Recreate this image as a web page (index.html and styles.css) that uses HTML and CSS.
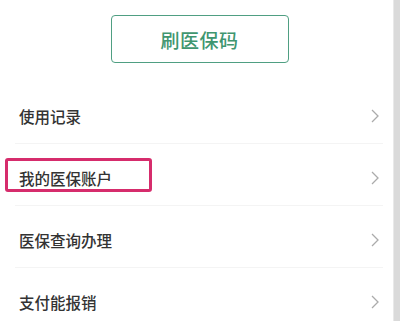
FILE: index.html
```html
<!DOCTYPE html>
<html lang="zh-CN">
<head>
    <meta charset="UTF-8">
    <meta name="viewport" content="width=device-width, initial-scale=1.0">
    <title>医保</title>
    <link rel="stylesheet" href="styles.css">
</head>
<body>
    <div class="page">
        <main class="content">
            <div class="code-area">
                <button class="code-btn">刷医保码</button>
            </div>
            <ul class="menu">
                <li class="item">
                    <span class="label">使用记录</span>
                    <svg class="arrow" width="8" height="14" viewBox="0 0 8 14"><polyline points="1,1 7,7 1,13" fill="none" stroke="#ababab" stroke-width="1.3"/></svg>
                </li>
                <li class="item">
                    <span class="label">我的医保账户</span>
                    <svg class="arrow" width="8" height="14" viewBox="0 0 8 14"><polyline points="1,1 7,7 1,13" fill="none" stroke="#ababab" stroke-width="1.3"/></svg>
                    <div class="mark"></div>
                </li>
                <li class="item">
                    <span class="label">医保查询办理</span>
                    <svg class="arrow" width="8" height="14" viewBox="0 0 8 14"><polyline points="1,1 7,7 1,13" fill="none" stroke="#ababab" stroke-width="1.3"/></svg>
                </li>
                <li class="item">
                    <span class="label">支付能报销</span>
                    <svg class="arrow" width="8" height="14" viewBox="0 0 8 14"><polyline points="1,1 7,7 1,13" fill="none" stroke="#ababab" stroke-width="1.3"/></svg>
                </li>
            </ul>
        </main>
        <div class="scroll-strip"></div>
    </div>
</body>
</html>
```

FILE: styles.css
```css
*{
    margin: 0;
    padding: 0;
    box-sizing: border-box;
}

body{
    background-color: #ffffff;
    font-family: "Noto Sans CJK SC", "Noto Sans", sans-serif;
    overflow: hidden;
}

.page{
    display: flex;
    height: 321px;
}

.content{
    flex: 1;
}

.scroll-strip{
    width: 7px;
    background-color: #dadada;
    border-left: 1px solid #e9e9e9;
}

.code-area{
    height: 82px;
    padding-top: 15px;
    display: flex;
    justify-content: center;
    padding-left: 6px;
}

.code-btn{
    width: 178px;
    height: 48px;
    background: #ffffff;
    border: 1.5px solid #4f9f82;
    border-radius: 4px;
    color: #3f9670;
    font-family: "Noto Sans CJK SC", sans-serif;
    font-size: 19px;
    font-weight: 500;
    letter-spacing: 0.5px;
}

.menu{
    list-style: none;
}

.item{
    position: relative;
    height: 62px;
    padding: 6px 14px 0 19px;
    display: flex;
    align-items: center;
    justify-content: space-between;
}

.item::after{
    content: "";
    position: absolute;
    left: 15px;
    right: 10px;
    bottom: 0;
    height: 1px;
    background-color: #f4f4f4;
}

.item:last-child::after{
    display: none;
}

.label{
    font-size: 15.5px;
    font-weight: 500;
    color: #333333;
}

.mark{
    position: absolute;
    left: 5px;
    top: 14px;
    width: 147px;
    height: 34px;
    border: 3.5px solid #d62c6c;
    border-radius: 3px;
}
```
